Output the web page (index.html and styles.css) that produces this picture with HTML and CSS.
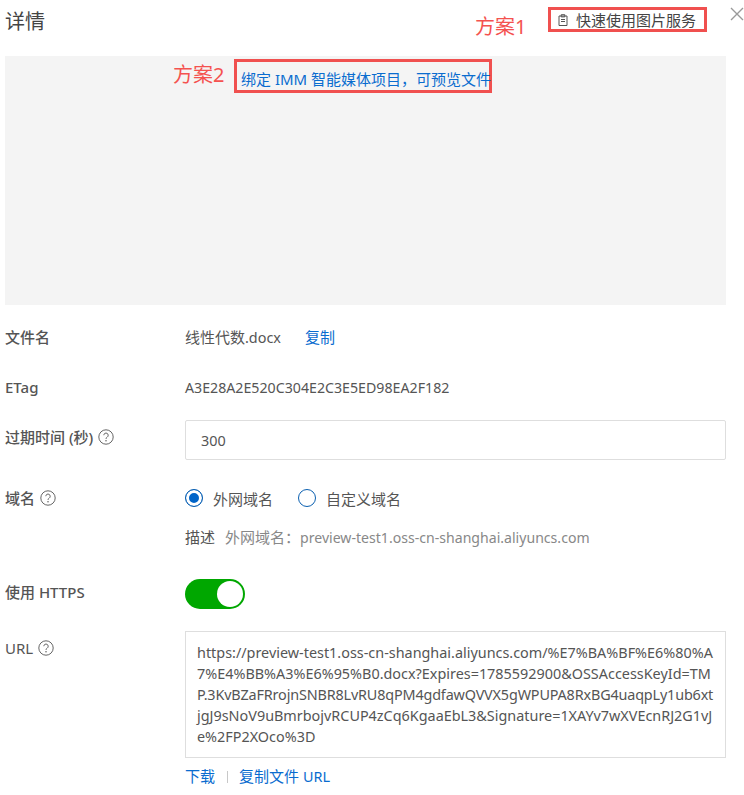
FILE: index.html
```html
<!DOCTYPE html>
<html lang="zh-CN">
<head>
<meta charset="utf-8">
<title>详情</title>
<link rel="stylesheet" href="styles.css">
</head>
<body>
<div class="panel">
  <header class="head">
    <h1 class="title">详情</h1>
    <span class="note note-one">方案1</span>
    <button class="quick" type="button">
      <svg class="quick-icon" viewBox="0 0 12 12" width="12" height="12"><path d="M2 2h8v9.5H2z M4.2 .7h3.6v2.2H4.2z M4 5.5h4 M4 7.5h4" fill="none" stroke="#555" stroke-width="1"/></svg>
      <span>快速使用图片服务</span>
    </button>
    <svg class="close" viewBox="0 0 14 14" width="14" height="14"><path d="M1 1l12 12M13 1L1 13" stroke="#9a9a9a" stroke-width="1.4" fill="none"/></svg>
  </header>

  <section class="preview">
    <span class="note note-two">方案2</span>
    <a class="bind">绑定 IMM 智能媒体项目，可预览文件</a>
  </section>

  <div class="row row-name">
    <div class="label strong">文件名</div>
    <div class="value">线性代数<span class="latin">.docx</span><a class="link copy">复制</a></div>
  </div>
  <div class="row row-etag">
    <div class="label etag-label">ETag</div>
    <div class="value etag">A3E28A2E520C304E2C3E5ED98EA2F182</div>
  </div>
  <div class="row row-expire">
    <div class="label strong">过期时间 (秒)
      <svg class="help" viewBox="0 0 16 16" width="16" height="16"><circle cx="8" cy="8" r="7.2" fill="none" stroke="#666" stroke-width="1"/><path d="M5.8 6.2a2.2 2.2 0 1 1 3.4 1.9c-.8.5-1.2.9-1.2 1.8" fill="none" stroke="#666" stroke-width="1"/><circle cx="8" cy="11.8" r=".8" fill="#666"/></svg>
    </div>
    <div class="field"><div class="input">300</div></div>
  </div>
  <div class="row row-domain">
    <div class="label strong">域名
      <svg class="help" viewBox="0 0 16 16" width="16" height="16"><circle cx="8" cy="8" r="7.2" fill="none" stroke="#666" stroke-width="1"/><path d="M5.8 6.2a2.2 2.2 0 1 1 3.4 1.9c-.8.5-1.2.9-1.2 1.8" fill="none" stroke="#666" stroke-width="1"/><circle cx="8" cy="11.8" r=".8" fill="#666"/></svg>
    </div>
    <div class="field">
      <div class="radios">
        <label class="radio"><span class="dot on"></span>外网域名</label>
        <label class="radio"><span class="dot"></span>自定义域名</label>
      </div>
      <div class="desc"><span class="desc-key">描述</span><span class="desc-val">外网域名：<span class="desc-host">preview-test1.oss-cn-shanghai.aliyuncs.com</span></span></div>
    </div>
  </div>
  <div class="row row-https">
    <div class="label strong">使用 HTTPS</div>
    <div class="field"><span class="switch"><span class="knob"></span></span></div>
  </div>
  <div class="row row-url">
    <div class="label">URL
      <svg class="help" viewBox="0 0 16 16" width="16" height="16"><circle cx="8" cy="8" r="7.2" fill="none" stroke="#666" stroke-width="1"/><path d="M5.8 6.2a2.2 2.2 0 1 1 3.4 1.9c-.8.5-1.2.9-1.2 1.8" fill="none" stroke="#666" stroke-width="1"/><circle cx="8" cy="11.8" r=".8" fill="#666"/></svg>
    </div>
    <div class="field">
      <div class="url">https://preview-test1.oss-cn-shanghai.aliyuncs.com/%E7%BA%BF%E6%80%A
7%E4%BB%A3%E6%95%B0.docx?Expires=1785592900&amp;OSSAccessKeyId=TM
<span class="tight">P.3KvBZaFRrojnSNBR8LvRU8qPM4gdfawQVVX5gWPUPA8RxBG4uaqpLy1ub6xt</span>
jgJ9sNoV9uBmrbojvRCUP4zCq6KgaaEbL3&amp;Signature=1XAYv7wXVEcnRJ2G1vJ
e%2FP2XOco%3D</div>
      <div class="actions"><a class="link">下载</a><span class="sep"></span><a class="link">复制文件 <span class="latin">URL</span></a></div>
    </div>
  </div>
</div>
</body>
</html>
```
FILE: styles.css
```css
* { box-sizing: border-box; }
html, body { margin: 0; padding: 0; background: #fff; }
body {
  width: 744px;
  height: 795px;
  overflow: hidden;
  font-family: "Noto Sans", "Noto Sans CJK SC", sans-serif;
  font-size: 15px;
  color: #555;
}
.panel { position: relative; padding: 0 18px 0 5px; }
.head { position: relative; height: 56px; }
.title {
  margin: 0;
  padding-top: 8px;
  font-size: 20px;
  line-height: 28px;
  font-weight: 400;
  color: #444;
}
.note {
  position: absolute;
  font-size: 20px;
  line-height: 28px;
  color: #f4524f;
}
.note-one { left: 470px; top: 13px; }
.note-two { left: 168px; top: 5px; }
.quick {
  position: absolute;
  left: 543px;
  top: 7px;
  width: 159px;
  height: 25px;
  display: flex;
  align-items: center;
  gap: 7px;
  padding: 0 0 0 6px;
  border: 3px solid #f0504f;
  background: #fff;
  font: inherit;
  color: #444;
}
.quick-icon { flex: none; }
.close { position: absolute; left: 725px; top: 7px; }
.preview { position: relative; height: 249px; width: 721px; background: #f4f4f4; }
.bind {
  position: absolute;
  left: 229px;
  top: 3px;
  width: 258px;
  height: 34px;
  border: 3px solid #f0504f;
  padding: 3px 0 0 4px;
  line-height: 28px;
  white-space: nowrap;
  color: #0a6ccf;
}
.row { display: flex; width: 721px; }
.label { flex: none; width: 180px; line-height: 21px; font-size: 15px; }
.strong { font-weight: 500; color: #555; }
.etag-label { font-weight: 500; }
.value { line-height: 21px; flex: 1; }
.latin { font-size: 14.4px; }
.etag { font-size: 14.2px; }
.field { flex: 1; min-width: 0; }
.help { vertical-align: -2px; margin-left: 1px; }
.link { color: #0a6ccf; }
.copy { margin-left: 24px; }
.row-name { margin-top: 22px; }
.row-etag { margin-top: 29px; }
.row-expire { margin-top: 22px; }
.row-expire .label { padding-top: 7px; }
.input {
  height: 40px;
  border: 1px solid #dedede;
  border-radius: 2px;
  padding: 0 15px;
  line-height: 39px;
  font-size: 14.4px;
}
.row-domain { margin-top: 27px; }
.row-domain .label { padding-top: 1px; }
.radios { display: flex; gap: 25px; height: 22px; align-items: center; }
.radio { display: flex; align-items: center; gap: 10px; }
.dot {
  width: 18px;
  height: 18px;
  border-radius: 50%;
  border: 1px solid #0a5fb0;
  background: #fff;
}
.dot.on { box-shadow: inset 0 0 0 3px #fff; background: #0064c8; }
.desc { margin-top: 18px; line-height: 21px; }
.desc-key { margin-right: 10px; }
.desc-val { color: #888; }
.desc-host { font-size: 14.1px; }
.row-https { margin-top: 31px; }
.row-https .label { padding-top: 3px; }
.switch {
  display: flex;
  justify-content: flex-end;
  align-items: center;
  width: 60px;
  height: 30px;
  border-radius: 15px;
  background: #00a700;
  padding: 0 2px;
}
.knob { width: 26px; height: 26px; border-radius: 50%; background: #fff; }
.row-url { margin-top: 22px; }
.row-url .label { padding-top: 7px; }
.url {
  height: 127px;
  border: 1px solid #dedede;
  padding: 10px 11px;
  font-size: 14.4px;
  line-height: 21px;
  white-space: pre;
  overflow: hidden;
}
.tight { letter-spacing: -0.16px; }
.actions { display: flex; align-items: center; margin-top: 8px; line-height: 21px; }
.sep { width: 1px; height: 12px; background: #c8c8c8; margin: 0 11px 0 12px; }
```
